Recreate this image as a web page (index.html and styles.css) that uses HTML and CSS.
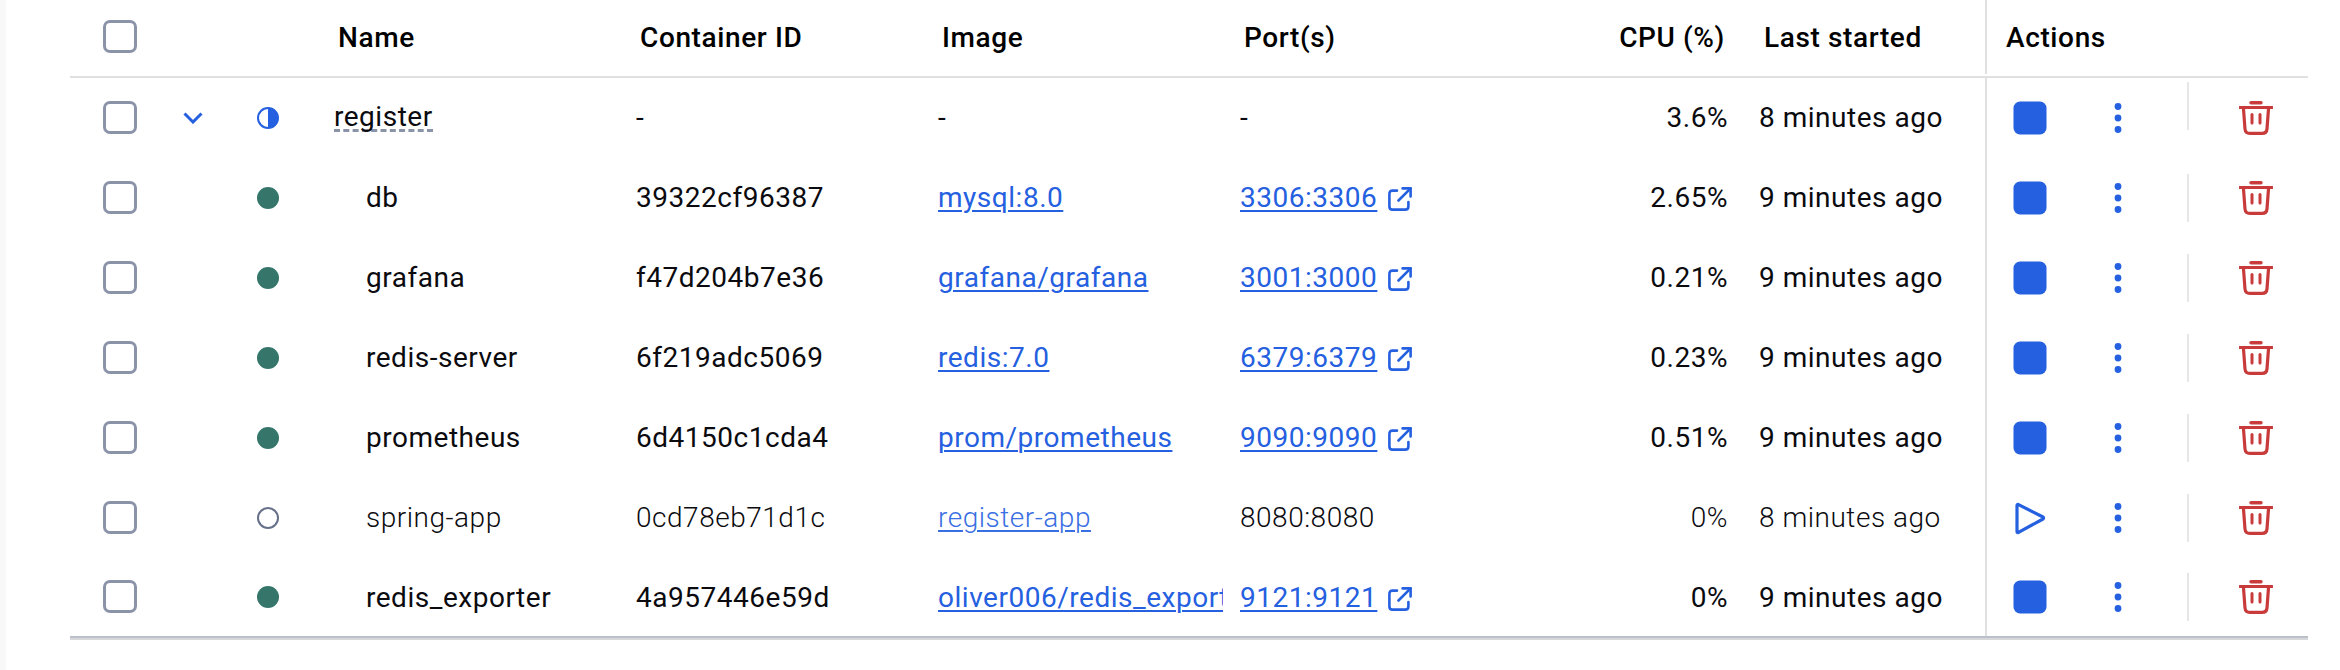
FILE: index.html
```html
<!DOCTYPE html>
<html lang="en">
<head>
<meta charset="utf-8">
<title>Containers</title>
<link rel="stylesheet" href="styles.css">
</head>
<body>
<svg class="defs" aria-hidden="true">
  <defs>
    <symbol id="i-stop" viewBox="0 0 34 34"><rect x="0.5" y="0.5" width="33" height="33" rx="6.5" fill="currentColor"/></symbol>
    <symbol id="i-play" viewBox="0 0 34 34"><path d="M5.5 3.6 L30 16 Q31.2 17 30 18 L5.5 31.4 Q4 32 4 30.4 V4.6 Q4 3 5.5 3.6 Z" fill="none" stroke="currentColor" stroke-width="3.2" stroke-linejoin="round"/></symbol>
    <symbol id="i-dots" viewBox="0 0 20 34"><circle cx="10" cy="5.5" r="3.4" fill="currentColor"/><circle cx="10" cy="17" r="3.4" fill="currentColor"/><circle cx="10" cy="28.5" r="3.4" fill="currentColor"/></symbol>
    <symbol id="i-trash" viewBox="0 0 34 34"><g fill="none" stroke="currentColor" stroke-linecap="round" stroke-linejoin="round"><path d="M1 6.5 H33" stroke-width="3.2"/><path d="M12 1.8 H22" stroke-width="3.4"/><path d="M4.4 6.5 L6 28 Q6.4 32.4 11 32.4 H23 Q27.6 32.4 28 28 L29.6 6.5" stroke-width="3.2"/><path d="M13 13.5 V22 M21 13.5 V22" stroke-width="3"/></g></symbol>
    <symbol id="i-ext" viewBox="0 0 24 24"><g fill="none" stroke="currentColor" stroke-width="2.6" stroke-linecap="round" stroke-linejoin="round"><path d="M9 3.6 H4.6 Q1.4 3.6 1.4 7 V19.4 Q1.4 22.6 4.6 22.6 H17 Q20.4 22.6 20.4 19.4 V15"/><path d="M10.5 13.5 L22.6 1.4"/><path d="M14.6 1.4 H22.6 V9.4"/></g></symbol>
  </defs>
</svg>

<main class="page">
  <div class="table">
    <div class="row head">
      <div class="cell check"><span class="box"></span></div>
      <div class="cell"></div>
      <div class="cell"></div>
      <div class="cell name">Name</div>
      <div class="cell">Container ID</div>
      <div class="cell">Image</div>
      <div class="cell">Port(s)</div>
      <div class="cell cpu">CPU (%)</div>
      <div class="cell last">Last started</div>
      <div class="cell actions">Actions</div>
    </div>

    <div class="row">
      <div class="cell check"><span class="box"></span></div>
      <div class="cell mid"><svg class="chev" viewBox="0 0 20 12"><path d="M1.5 1.5 L10 10 L18.5 1.5" fill="none" stroke="currentColor" stroke-width="3"/></svg></div>
      <div class="cell mid"><svg class="status" viewBox="0 0 22 22"><circle cx="11" cy="11" r="10" fill="#fff" stroke="currentColor" stroke-width="2"/><path d="M11 1 A10 10 0 0 1 11 21 Z" fill="currentColor"/></svg></div>
      <div class="cell stack"><span class="dashed">register</span></div>
      <div class="cell">-</div>
      <div class="cell">-</div>
      <div class="cell">-</div>
      <div class="cell cpu">3.6%</div>
      <div class="cell">8 minutes ago</div>
      <div class="cell actions">
        <svg class="ic-stop"><use href="#i-stop"/></svg>
        <svg class="ic-dots"><use href="#i-dots"/></svg>
        <span class="divider first"></span>
        <svg class="ic-trash"><use href="#i-trash"/></svg>
      </div>
    </div>

    <div class="row">
      <div class="cell check"><span class="box"></span></div>
      <div class="cell"></div>
      <div class="cell mid"><span class="dot"></span></div>
      <div class="cell child">db</div>
      <div class="cell">39322cf96387</div>
      <div class="cell"><a class="link" href="#">mysql:8.0</a></div>
      <div class="cell"><a class="link" href="#">3306:3306</a><svg class="ic-ext"><use href="#i-ext"/></svg></div>
      <div class="cell cpu">2.65%</div>
      <div class="cell">9 minutes ago</div>
      <div class="cell actions">
        <svg class="ic-stop"><use href="#i-stop"/></svg>
        <svg class="ic-dots"><use href="#i-dots"/></svg>
        <span class="divider"></span>
        <svg class="ic-trash"><use href="#i-trash"/></svg>
      </div>
    </div>

    <div class="row">
      <div class="cell check"><span class="box"></span></div>
      <div class="cell"></div>
      <div class="cell mid"><span class="dot"></span></div>
      <div class="cell child">grafana</div>
      <div class="cell">f47d204b7e36</div>
      <div class="cell"><a class="link" href="#">grafana/grafana</a></div>
      <div class="cell"><a class="link" href="#">3001:3000</a><svg class="ic-ext"><use href="#i-ext"/></svg></div>
      <div class="cell cpu">0.21%</div>
      <div class="cell">9 minutes ago</div>
      <div class="cell actions">
        <svg class="ic-stop"><use href="#i-stop"/></svg>
        <svg class="ic-dots"><use href="#i-dots"/></svg>
        <span class="divider"></span>
        <svg class="ic-trash"><use href="#i-trash"/></svg>
      </div>
    </div>

    <div class="row">
      <div class="cell check"><span class="box"></span></div>
      <div class="cell"></div>
      <div class="cell mid"><span class="dot"></span></div>
      <div class="cell child">redis-server</div>
      <div class="cell">6f219adc5069</div>
      <div class="cell"><a class="link" href="#">redis:7.0</a></div>
      <div class="cell"><a class="link" href="#">6379:6379</a><svg class="ic-ext"><use href="#i-ext"/></svg></div>
      <div class="cell cpu">0.23%</div>
      <div class="cell">9 minutes ago</div>
      <div class="cell actions">
        <svg class="ic-stop"><use href="#i-stop"/></svg>
        <svg class="ic-dots"><use href="#i-dots"/></svg>
        <span class="divider"></span>
        <svg class="ic-trash"><use href="#i-trash"/></svg>
      </div>
    </div>

    <div class="row">
      <div class="cell check"><span class="box"></span></div>
      <div class="cell"></div>
      <div class="cell mid"><span class="dot"></span></div>
      <div class="cell child">prometheus</div>
      <div class="cell">6d4150c1cda4</div>
      <div class="cell"><a class="link" href="#">prom/prometheus</a></div>
      <div class="cell"><a class="link" href="#">9090:9090</a><svg class="ic-ext"><use href="#i-ext"/></svg></div>
      <div class="cell cpu">0.51%</div>
      <div class="cell">9 minutes ago</div>
      <div class="cell actions">
        <svg class="ic-stop"><use href="#i-stop"/></svg>
        <svg class="ic-dots"><use href="#i-dots"/></svg>
        <span class="divider"></span>
        <svg class="ic-trash"><use href="#i-trash"/></svg>
      </div>
    </div>

    <div class="row stopped">
      <div class="cell check"><span class="box"></span></div>
      <div class="cell"></div>
      <div class="cell mid"><span class="dot off"></span></div>
      <div class="cell child">spring-app</div>
      <div class="cell">0cd78eb71d1c</div>
      <div class="cell"><a class="link" href="#">register-app</a></div>
      <div class="cell">8080:8080</div>
      <div class="cell cpu">0%</div>
      <div class="cell">8 minutes ago</div>
      <div class="cell actions">
        <svg class="ic-stop"><use href="#i-play"/></svg>
        <svg class="ic-dots"><use href="#i-dots"/></svg>
        <span class="divider"></span>
        <svg class="ic-trash"><use href="#i-trash"/></svg>
      </div>
    </div>

    <div class="row">
      <div class="cell check"><span class="box"></span></div>
      <div class="cell"></div>
      <div class="cell mid"><span class="dot"></span></div>
      <div class="cell child">redis_exporter</div>
      <div class="cell">4a957446e59d</div>
      <div class="cell clip"><a class="link" href="#">oliver006/redis_exporter</a></div>
      <div class="cell"><a class="link" href="#">9121:9121</a><svg class="ic-ext"><use href="#i-ext"/></svg></div>
      <div class="cell cpu">0%</div>
      <div class="cell">9 minutes ago</div>
      <div class="cell actions">
        <svg class="ic-stop"><use href="#i-stop"/></svg>
        <svg class="ic-dots"><use href="#i-dots"/></svg>
        <span class="divider"></span>
        <svg class="ic-trash"><use href="#i-trash"/></svg>
      </div>
    </div>
  </div>
</main>
</body>
</html>
```
FILE: styles.css
```css
* { box-sizing: border-box; }

html, body {
  margin: 0;
  height: 670px;
  overflow: hidden;
  background: #fff;
}

.defs { display: none; }

.page {
  height: 670px;
  padding-left: 64px;
  border-left: 6px solid #f8f8f8;
  font-family: Roboto, "Liberation Sans", sans-serif;
  font-size: 28px;
  letter-spacing: 0.52px;
  color: #0b0b0f;
}

.table {
  width: 2238px;
  border-bottom: 2px solid #d6d8dc;
  box-shadow: inset 0 -2px 0 #bcc0c8;
  padding-bottom: 2px;
}

.row {
  display: grid;
  grid-template-columns: 90px 66px 84px 326px 302px 302px 300px 219px 226px 323px;
  height: 80px;
  align-items: center;
}

.row:last-child { height: 78px; }

.cell {
  white-space: nowrap;
  display: flex;
  align-items: center;
  height: 100%;
  min-width: 0;
  padding-bottom: 2px;
}

.row:last-child .cell { padding-bottom: 0; }

.head {
  height: 78px;
  padding-bottom: 2px;
  font-weight: 500;
  letter-spacing: 0.62px;
  color: #000;
  border-bottom: 2px solid #e0e0e0;
}

.head .cell { padding-left: 4px; padding-bottom: 0; }
.head .cell.check { padding-left: 33px; }
.head .cell.name { padding-left: 28px; }
.head .cell.cpu { padding-left: 0; padding-right: 34px; }
.head .cell.last { padding-left: 5px; }
.head .cell.actions { padding-left: 19px; }

.check { padding-left: 33px; }
.mid { justify-content: center; }
.stack { padding-left: 24px; }
.child { padding-left: 56px; }
.clip { overflow: hidden; margin-right: 17px; }

.row .check, .row .mid, .row .actions { padding-bottom: 0; }

.cpu {
  justify-content: flex-end;
  padding-right: 31px;
}

.box {
  display: block;
  width: 34px;
  height: 33px;
  margin-bottom: 1px;
  border: 3.4px solid #8a93a8;
  border-radius: 7px;
  background: #fff;
}

.chev { width: 20px; height: 12px; color: #2560e0; }
.status { width: 22px; height: 22px; color: #2560e0; }

.dot {
  display: block;
  width: 22px;
  height: 22px;
  border-radius: 50%;
  background: #35756a;
}

.dot.off {
  background: #fff;
  border: 2px solid #67708a;
}

.dashed {
  padding-top: 3px;
  border-bottom: 3px dashed #8a93a8;
  line-height: 24px;
}

.link {
  color: #2560e0;
  text-decoration: underline;
  text-decoration-thickness: 2px;
  text-underline-offset: 3px;
}

.stopped .cell:not(.actions) { font-weight: 300; }
.stopped .link { opacity: 0.9; }

.ic-ext {
  width: 24px;
  height: 24px;
  margin-left: 11px;
  margin-top: 4px;
  color: #2560e0;
}

.actions {
  padding-left: 26px;
  border-left: 2px solid #e0e0e0;
}

.ic-stop { width: 34px; height: 34px; color: #2560e0; flex: none; }
.ic-dots { width: 20px; height: 34px; margin-left: 61px; color: #2560e0; flex: none; }
.ic-trash { width: 34px; height: 34px; margin-left: 50px; color: #c93a3a; flex: none; }

.divider {
  width: 2px;
  height: 48px;
  margin-left: 59px;
  background: #e6e6e6;
  flex: none;
}

.divider.first { margin-bottom: 24px; }
```
